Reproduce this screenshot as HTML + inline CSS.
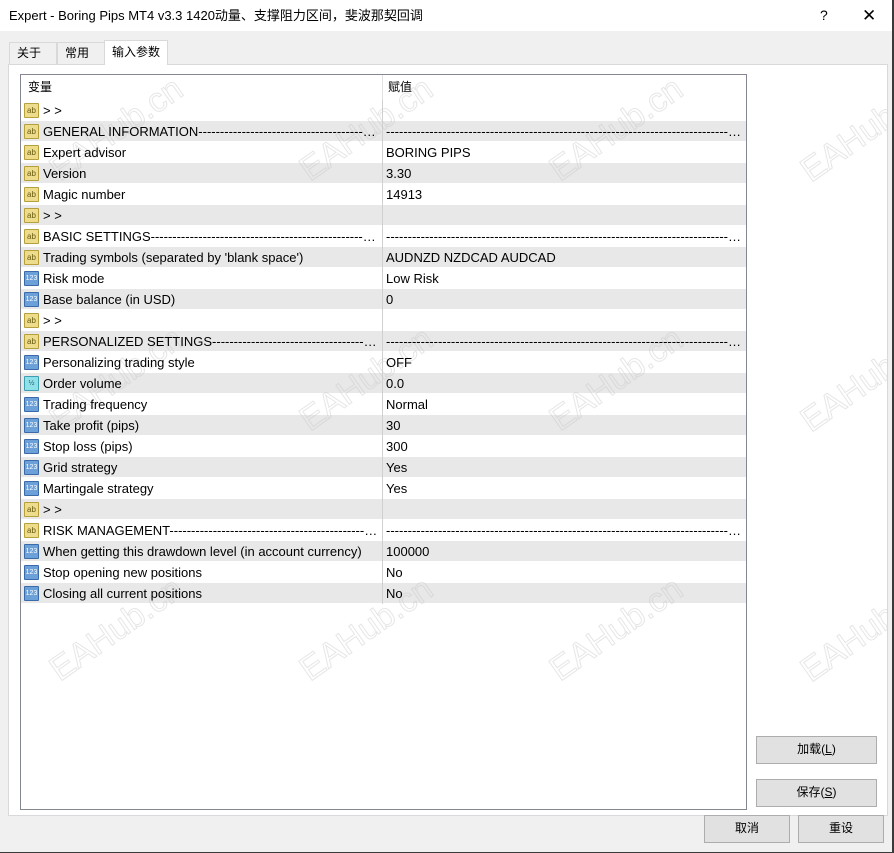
<!DOCTYPE html>
<html><head><meta charset="utf-8"><style>
*{box-sizing:border-box;margin:0;padding:0}
body{width:894px;height:853px;background:#3a3a3a;font-family:"Liberation Sans","Noto Sans CJK SC",sans-serif;font-size:13px;color:#000;position:relative;overflow:hidden}
#win{position:absolute;left:0;top:0;width:892px;height:852px;background:#f0f0f0;overflow:hidden}
#title{position:absolute;left:0;top:0;width:892px;height:31px;background:#fff;font-size:13px;line-height:31px;padding-left:9px}
.tb{position:absolute;top:0;line-height:31px;font-size:14px}
.tab{position:absolute;top:42px;height:22px;border:1px solid #d9d9d9;border-bottom:none;background:#f0f0f0;line-height:21px;padding-left:7px;font-size:12px}
#panel{position:absolute;left:8px;top:64px;width:880px;height:752px;background:#fff;border:1px solid #d9d9d9;overflow:hidden}
#grid{position:absolute;left:20px;top:74px;width:727px;height:736px;border:1px solid #828790;background:#fff}
.r{position:absolute;left:0;width:725px;height:21px;border-bottom:1px solid #fff}
.g{background:#e8e8e8}
.c1{position:absolute;left:22px;top:0;line-height:21px;white-space:nowrap;width:336px;overflow:hidden;text-overflow:ellipsis;z-index:3}
.c2{position:absolute;left:365px;top:0;line-height:21px;white-space:nowrap;width:355px;overflow:hidden;text-overflow:ellipsis;z-index:3}
.vl{position:absolute;left:361px;top:0;width:1px;height:530px;background:#d0d0d0}
.ic{position:absolute;left:3px;top:3px;width:15px;height:15px;font-size:8px;line-height:13px;text-align:center;border:1px solid;border-radius:1px}
.ab{background:#ecdc8c;border-color:#b79f3a;color:#6a5a10}
.n{background:#6ba0d8;border-color:#3a6aa8;color:#fff;font-size:7px}
.h{background:#8fe0e8;border-color:#3aa0b0;color:#206070;font-size:7px}
.btn{position:absolute;background:#e1e1e1;border:1px solid #adadad;text-align:center;line-height:25px;font-size:12px}
#wml{position:absolute;left:0;top:0;width:894px;height:853px;pointer-events:none}
.wm{position:absolute;color:transparent;-webkit-text-stroke:1px rgba(200,200,200,0.45);font-size:34px;transform:rotate(-35deg);font-family:"Liberation Sans",sans-serif;white-space:nowrap}
</style></head><body>
<div id="win">
<div id="title">Expert - Boring Pips MT4 v3.3 1420动量、支撑阻力区间，斐波那契回调</div>
<div class="tb" style="left:820px">?</div>
<div class="tb" style="left:862px;font-size:17px">✕</div>
<div class="tab" style="left:9px;width:48px">关于</div>
<div class="tab" style="left:57px;width:48px">常用</div>
<div class="tab" style="left:104px;top:40px;height:25px;width:64px;background:#fff;z-index:2;line-height:23px">输入参数</div>
<div id="panel">
<div class="wm" style="left:32px;top:46px">EAHub.cn</div>
<div class="wm" style="left:282px;top:46px">EAHub.cn</div>
<div class="wm" style="left:532px;top:46px">EAHub.cn</div>
<div class="wm" style="left:782px;top:46px">EAHub.cn</div>
<div class="wm" style="left:32px;top:296px">EAHub.cn</div>
<div class="wm" style="left:282px;top:296px">EAHub.cn</div>
<div class="wm" style="left:532px;top:296px">EAHub.cn</div>
<div class="wm" style="left:782px;top:296px">EAHub.cn</div>
<div class="wm" style="left:32px;top:546px">EAHub.cn</div>
<div class="wm" style="left:282px;top:546px">EAHub.cn</div>
<div class="wm" style="left:532px;top:546px">EAHub.cn</div>
<div class="wm" style="left:782px;top:546px">EAHub.cn</div>
</div>
<div id="grid">
<div style="position:absolute;left:0;top:0;width:725px;height:25px;background:#fff"><div style="position:absolute;left:7px;line-height:25px;font-size:12px">变量</div><div style="position:absolute;left:361px;top:0;width:1px;height:25px;background:#e0e0e0"></div><div style="position:absolute;left:367px;line-height:25px;font-size:12px">赋值</div></div>
<div style="position:absolute;top:25px;left:0;width:725px">
<div class="r" style="top:0"><span class="ic ab">ab</span><div class="c1">&gt; &gt;</div></div>
<div class="r g" style="top:21px"><span class="ic ab">ab</span><div class="c1">GENERAL INFORMATION------------------------------------------------------------------------------</div><div class="c2">------------------------------------------------------------------------------------------------------</div></div>
<div class="r" style="top:42px"><span class="ic ab">ab</span><div class="c1">Expert advisor</div><div class="c2">BORING PIPS</div></div>
<div class="r g" style="top:63px"><span class="ic ab">ab</span><div class="c1">Version</div><div class="c2">3.30</div></div>
<div class="r" style="top:84px"><span class="ic ab">ab</span><div class="c1">Magic number</div><div class="c2">14913</div></div>
<div class="r g" style="top:105px"><span class="ic ab">ab</span><div class="c1">&gt; &gt;</div></div>
<div class="r" style="top:126px"><span class="ic ab">ab</span><div class="c1">BASIC SETTINGS------------------------------------------------------------------------------------</div><div class="c2">------------------------------------------------------------------------------------------------------</div></div>
<div class="r g" style="top:147px"><span class="ic ab">ab</span><div class="c1">Trading symbols (separated by 'blank space')</div><div class="c2">AUDNZD NZDCAD AUDCAD</div></div>
<div class="r" style="top:168px"><span class="ic n">123</span><div class="c1">Risk mode</div><div class="c2">Low Risk</div></div>
<div class="r g" style="top:189px"><span class="ic n">123</span><div class="c1">Base balance (in USD)</div><div class="c2">0</div></div>
<div class="r" style="top:210px"><span class="ic ab">ab</span><div class="c1">&gt; &gt;</div></div>
<div class="r g" style="top:231px"><span class="ic ab">ab</span><div class="c1">PERSONALIZED SETTINGS-----------------------------------------------------------------------</div><div class="c2">------------------------------------------------------------------------------------------------------</div></div>
<div class="r" style="top:252px"><span class="ic n">123</span><div class="c1">Personalizing trading style</div><div class="c2">OFF</div></div>
<div class="r g" style="top:273px"><span class="ic h">½</span><div class="c1">Order volume</div><div class="c2">0.0</div></div>
<div class="r" style="top:294px"><span class="ic n">123</span><div class="c1">Trading frequency</div><div class="c2">Normal</div></div>
<div class="r g" style="top:315px"><span class="ic n">123</span><div class="c1">Take profit (pips)</div><div class="c2">30</div></div>
<div class="r" style="top:336px"><span class="ic n">123</span><div class="c1">Stop loss (pips)</div><div class="c2">300</div></div>
<div class="r g" style="top:357px"><span class="ic n">123</span><div class="c1">Grid strategy</div><div class="c2">Yes</div></div>
<div class="r" style="top:378px"><span class="ic n">123</span><div class="c1">Martingale strategy</div><div class="c2">Yes</div></div>
<div class="r g" style="top:399px"><span class="ic ab">ab</span><div class="c1">&gt; &gt;</div></div>
<div class="r" style="top:420px"><span class="ic ab">ab</span><div class="c1">RISK MANAGEMENT--------------------------------------------------------------------------------</div><div class="c2">------------------------------------------------------------------------------------------------------</div></div>
<div class="r g" style="top:441px"><span class="ic n">123</span><div class="c1">When getting this drawdown level (in account currency)</div><div class="c2">100000</div></div>
<div class="r" style="top:462px"><span class="ic n">123</span><div class="c1">Stop opening new positions</div><div class="c2">No</div></div>
<div class="r g" style="top:483px"><span class="ic n">123</span><div class="c1">Closing all current positions</div><div class="c2">No</div></div>
<div class="vl" style="top:0;height:504px"></div>
</div>
<div style="position:absolute;left:-21px;top:-75px;width:894px;height:853px;overflow:visible;pointer-events:none;z-index:1">
<div class="wm" style="left:40px;top:110px">EAHub.cn</div>
<div class="wm" style="left:290px;top:110px">EAHub.cn</div>
<div class="wm" style="left:540px;top:110px">EAHub.cn</div>
<div class="wm" style="left:40px;top:360px">EAHub.cn</div>
<div class="wm" style="left:290px;top:360px">EAHub.cn</div>
<div class="wm" style="left:540px;top:360px">EAHub.cn</div>
<div class="wm" style="left:40px;top:610px">EAHub.cn</div>
<div class="wm" style="left:290px;top:610px">EAHub.cn</div>
<div class="wm" style="left:540px;top:610px">EAHub.cn</div>
</div>
</div>
<div class="btn" style="left:756px;top:736px;width:121px;height:28px">加载(<u>L</u>)</div>
<div class="btn" style="left:756px;top:779px;width:121px;height:28px">保存(<u>S</u>)</div>
<div class="btn" style="left:704px;top:815px;width:86px;height:28px">取消</div>
<div class="btn" style="left:798px;top:815px;width:86px;height:28px">重设</div>
</div>
</body></html>
